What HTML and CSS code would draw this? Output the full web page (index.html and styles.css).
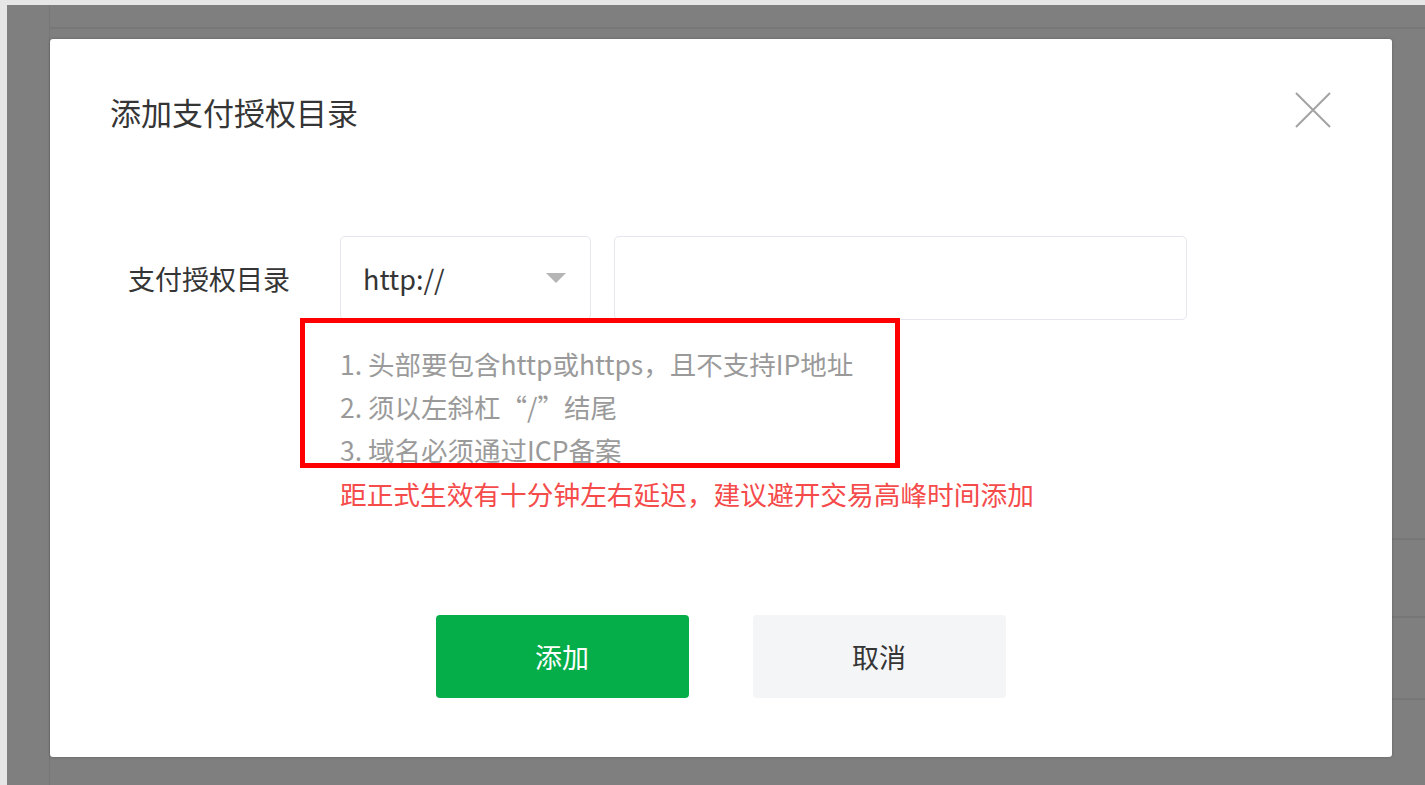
FILE: index.html
```html
<!DOCTYPE html>
<html lang="zh-CN">
<head>
<meta charset="utf-8">
<title>添加支付授权目录</title>
<link rel="stylesheet" href="styles.css">
</head>
<body>
<div class="screen">
  <div class="backdrop">
    <div class="side"></div>
    <div class="main">
      <div class="main-head"></div>
      <div class="row row-a"></div>
      <div class="row row-b"></div>
      <div class="row row-c"></div>
    </div>
  </div>

  <div class="modal">
    <div class="modal-head">
      <h2 class="modal-title">添加支付授权目录</h2>
      <button class="close" aria-label="关闭">
        <svg width="36" height="36" viewBox="0 0 36 36"><path d="M1 1 L35 35 M35 1 L1 35" stroke="#a3a3a3" stroke-width="2" fill="none"/></svg>
      </button>
    </div>

    <div class="form-row">
      <div class="label">支付授权目录</div>
      <div class="select">
        <span class="select-value">http://</span>
        <span class="caret"></span>
      </div>
      <div class="input"></div>
    </div>

    <div class="tips">
      <div class="tip">1. 头部要包含http或https，且不支持IP地址</div>
      <div class="tip">2. 须以左斜杠“/”结尾</div>
      <div class="tip">3. 域名必须通过ICP备案</div>
      <div class="mark"></div>
    </div>
    <div class="warn">距正式生效有十分钟左右延迟，建议避开交易高峰时间添加</div>

    <div class="actions">
      <button class="btn btn-primary">添加</button>
      <button class="btn btn-default">取消</button>
    </div>
  </div>
</div>
</body>
</html>
```

FILE: styles.css
```css
* { box-sizing: border-box; }

html, body {
  margin: 0;
  padding: 0;
}

body {
  font-family: "Noto Sans CJK SC", "Noto Sans", "Liberation Sans", sans-serif;
  background: #e6e6e6;
}

.screen {
  position: relative;
  width: 1425px;
  height: 785px;
  padding: 5px 0 0 7px;
  background: #e6e6e6;
  overflow: hidden;
}

.backdrop {
  display: flex;
  height: 100%;
  background: #7f7f7f;
}

.side {
  width: 43px;
  border-right: 1px solid #767676;
}

.main {
  flex: 1;
  display: flex;
  flex-direction: column;
}

.main-head {
  height: 24px;
  border-bottom: 2px solid #777777;
}

.row {
  border-bottom: 2px solid #777777;
}

.row-a { height: 511px; }
.row-b { height: 78px; }
.row-c { height: 82px; }

.modal {
  position: absolute;
  left: 50px;
  top: 39px;
  width: 1342px;
  height: 718px;
  background: #ffffff;
  border-radius: 3px;
  box-shadow: 0 0 3px rgba(0, 0, 0, 0.25);
  padding: 53px 61px 59px 60px;
}

.modal-head {
  display: flex;
  align-items: center;
  justify-content: space-between;
  height: 40px;
}

.modal-title {
  margin: 0;
  font-size: 31px;
  font-weight: normal;
  color: #353535;
  line-height: 40px;
}

.close {
  display: flex;
  padding: 0;
  border: 0;
  background: none;
  margin-top: -4px;
}

.form-row {
  display: flex;
  align-items: center;
  margin-top: 104px;
  height: 84px;
}

.label {
  width: 212px;
  margin-left: 18px;
  font-size: 27px;
  color: #353535;
}

.select {
  display: flex;
  align-items: center;
  justify-content: space-between;
  width: 251px;
  height: 84px;
  border: 1px solid #e6e7ed;
  border-radius: 5px;
  padding: 0 24px 0 22px;
}

.select-value {
  font-size: 27px;
  color: #353535;
}

.caret {
  width: 0;
  height: 0;
  border-left: 10px solid transparent;
  border-right: 10px solid transparent;
  border-top: 10px solid #b5b5b5;
}

.input {
  width: 573px;
  height: 84px;
  margin-left: 23px;
  border: 1px solid #e6e7ed;
  border-radius: 5px;
}

.tips {
  position: relative;
  margin: 22px 0 0 230px;
}

.tip {
  font-size: 26.5px;
  line-height: 43px;
  color: #9a9a9a;
}

.mark {
  position: absolute;
  left: -40px;
  top: -24px;
  width: 600px;
  height: 150px;
  border: 5px solid #ff0000;
}

.warn {
  margin: 1px 0 0 230px;
  font-size: 26.7px;
  line-height: 43px;
  color: #f54b4b;
}

.actions {
  display: flex;
  justify-content: center;
  gap: 64px;
  margin-top: 100px;
}

.btn {
  width: 253px;
  height: 83px;
  border: 0;
  border-radius: 4px;
  font-family: inherit;
  font-size: 27px;
}

.btn-primary {
  background: #06ae4a;
  color: #ffffff;
}

.btn-default {
  background: #f4f5f7;
  color: #353535;
}
```
